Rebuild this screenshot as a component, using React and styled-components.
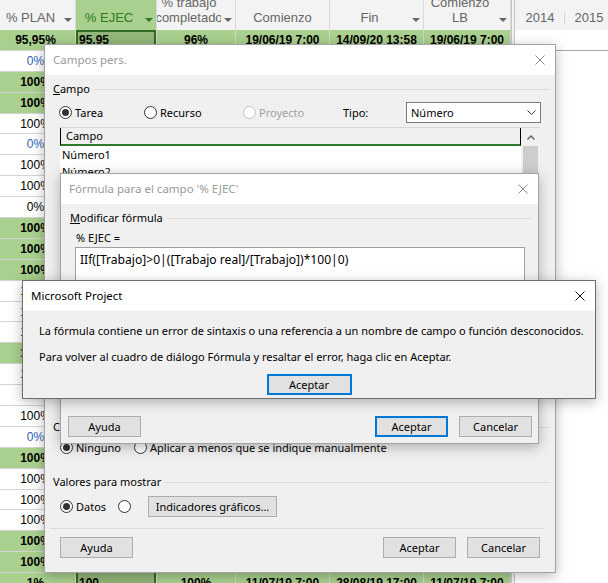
import React from 'react';
import styled, { createGlobalStyle } from 'styled-components';

const uiFont = '"Noto Sans", "Open Sans", "Liberation Sans", sans-serif';
const gridFont = '"Liberation Sans", Arial, sans-serif';

const GlobalStyle = createGlobalStyle`
  html, body {
    margin: 0;
    padding: 0;
    background: #ffffff;
    overflow: hidden;
  }
  * {
    box-sizing: border-box;
  }
`;

const Screen = styled.div`
  position: relative;
  width: 608px;
  height: 583px;
  overflow: hidden;
  background: #ffffff;
`;

/* ---------- hoja de tareas (fondo) ---------- */

const columns = '76px 81px 79px 94px 94px 87px';

const Sheet = styled.div`
  display: flex;
  height: 100%;
  font-family: ${gridFont};
`;

const Table = styled.div`
  flex: none;
  width: 511px;
`;

const HeadRow = styled.div`
  display: grid;
  grid-template-columns: ${columns};
  height: 30px;
  background: #f3f3f3;
`;

const HeadCell = styled.div`
  display: flex;
  align-items: flex-end;
  padding-bottom: 5px;
  border-right: 1px solid #dadada;
  background: ${(p) => (p.$active ? '#a9d08e' : 'transparent')};
  color: ${(p) => (p.$active ? '#2f7a23' : '#666666')};
  font-size: 13px;
  line-height: 15px;
  overflow: hidden;
`;

const HeadLabel = styled.div`
  flex: 1;
  min-width: 0;
  display: flex;
  flex-direction: column;
  align-items: center;
  white-space: nowrap;
  overflow: hidden;
`;

const SortArrow = styled.span`
  flex: none;
  width: 14px;
  height: 15px;
  display: flex;
  align-items: center;
  justify-content: center;
  &::after {
    content: '';
    margin-top: 5px;
    border-left: 4px solid transparent;
    border-right: 4px solid transparent;
    border-top: 4px solid currentColor;
  }
`;

const DataRow = styled.div`
  display: grid;
  grid-template-columns: ${columns};
  height: 20.9px;
  background: ${(p) => (p.$summary ? '#a9d08e' : '#ffffff')};
  font-weight: ${(p) => (p.$summary ? 700 : 400)};
  font-size: 12px;
  color: #000000;
`;

const Cell = styled.div`
  display: flex;
  align-items: center;
  justify-content: ${(p) => (p.$align === 'left' ? 'flex-start' : 'center')};
  padding: ${(p) => (p.$align === 'left' ? '0 0 0 3px' : p.$pad || '0')};
  border-right: 1px solid #d4d4d4;
  border-bottom: 1px solid #d4d4d4;
  white-space: nowrap;
  overflow: hidden;
  color: ${(p) => (p.$blue ? '#2f63b4' : 'inherit')};
`;

// columna % EJEC seleccionada
const PickCell = styled(Cell)`
  background: ${(p) => (p.$summary ? '#93b779' : '#e2e2e2')};
  box-shadow: ${(p) =>
    p.$current
      ? 'inset 0 0 0 2px #2f6b24'
      : 'inset 2px 0 0 #2f6b24, inset -2px 0 0 #2f6b24'};
`;

const Split = styled.div`
  flex: none;
  width: 4px;
  background: #f3f3f3;
  border-left: 1px solid #c4c4c4;
  border-right: 1px solid #c4c4c4;
`;

const Gantt = styled.div`
  flex: 1;
  min-width: 0;
`;

const Timescale = styled.div`
  display: flex;
  align-items: flex-end;
  height: 30px;
  padding: 0 0 5px 1px;
  background: #f3f3f3;
  color: #666666;
  font-size: 13px;
  line-height: 15px;
`;

const Year = styled.div`
  flex: none;
  width: 48px;
  text-align: center;
`;

const YearTick = styled.div`
  flex: none;
  width: 1px;
  height: 12px;
  margin-bottom: 1px;
  background: #d6d6d6;
`;

const GanttBand = styled.div`
  height: 21px;
  border-bottom: 1px solid #a6a6a6;
`;

/* ---------- ventanas ---------- */

const Window = styled.div`
  position: absolute;
  left: ${(p) => p.$x}px;
  top: ${(p) => p.$y}px;
  width: ${(p) => p.$w}px;
  height: ${(p) => p.$h}px;
  display: flex;
  flex-direction: column;
  background: #f0f0f0;
  border: 1px solid ${(p) => (p.$active ? '#6e6e6e' : '#a3a3a3')};
  box-shadow: 0 3px 12px rgba(0, 0, 0, 0.28);
  font-family: ${uiFont};
  font-size: 11px;
  line-height: 16px;
  color: #000000;
`;

const TitleBar = styled.div`
  flex: none;
  display: flex;
  align-items: center;
  height: 30px;
  padding-left: 8px;
  background: #ffffff;
  color: ${(p) => (p.$active ? '#000000' : '#9b9b9b')};
  font-size: 11.5px;
`;

const Caption = styled.div`
  flex: 1;
  white-space: nowrap;
`;

const CloseBox = styled.div`
  flex: none;
  width: 30px;
  height: 100%;
  display: flex;
  align-items: center;
  justify-content: center;
`;

const Body = styled.div`
  flex: 1;
  display: flex;
  flex-direction: column;
  padding: ${(p) => p.$pad};
`;

const Group = styled.div`
  flex: none;
  display: flex;
  align-items: center;
  gap: 4px;
  height: 16px;
  margin-top: ${(p) => p.$mt}px;
  white-space: nowrap;
  &::after {
    content: '';
    flex: 1;
    height: 1px;
    background: #dcdcdc;
  }
`;

const Line = styled.div`
  flex: none;
  display: flex;
  align-items: center;
  height: 21px;
  margin-top: ${(p) => p.$mt}px;
  margin-left: ${(p) => p.$indent}px;
  gap: ${(p) => p.$gap || 0}px;
  white-space: nowrap;
`;

const ScopeRow = styled.div`
  flex: none;
  display: grid;
  grid-template-columns: 85px 99px 100px 63px 135px;
  align-items: center;
  height: 21px;
  margin: 5px 0 0 6px;
`;

const Option = styled.span`
  flex: none;
  display: flex;
  align-items: center;
  gap: 3px;
  width: ${(p) => (p.$w ? `${p.$w}px` : 'auto')};
  color: ${(p) => (p.$disabled ? '#a0a0a0' : '#000000')};
  white-space: nowrap;
`;

const RadioMark = styled.span`
  flex: none;
  width: 13px;
  height: 13px;
  border-radius: 50%;
  border: 1px solid ${(p) => (p.$disabled ? '#c2c2c2' : '#333333')};
  background: #ffffff;
  display: flex;
  align-items: center;
  justify-content: center;
  &::after {
    content: '';
    width: 7px;
    height: 7px;
    border-radius: 50%;
    background: #333333;
    display: ${(p) => (p.$checked ? 'block' : 'none')};
  }
`;

const Dropdown = styled.div`
  display: flex;
  align-items: center;
  justify-content: space-between;
  width: ${(p) => (p.$w ? `${p.$w}px` : 'auto')};
  height: 21px;
  padding: 0 4px 0 4px;
  background: #ffffff;
  border: 1px solid #7a7a7a;
`;

const FieldList = styled.div`
  flex: none;
  display: flex;
  height: 163px;
  margin: 4px 10px 0 7px;
  border-top: 1px solid #d6d6d6;
  background: #ffffff;
`;

const ListColumn = styled.div`
  flex: 1;
  min-width: 0;
`;

const ListHead = styled.div`
  display: flex;
  align-items: center;
  height: 18px;
  padding-left: 5px;
  background: #f0f0f0;
  border-left: 1px solid #000000;
  border-right: 1px solid #000000;
  border-bottom: 2px solid #2e7a2a;
`;

const ListItem = styled.div`
  height: 17px;
  padding-left: 2px;
  line-height: 17px;
  white-space: nowrap;
`;

const ScrollTrack = styled.div`
  flex: none;
  width: 19px;
  display: flex;
  flex-direction: column;
  align-items: center;
  background: #f0f0f0;
`;

const ScrollButton = styled.div`
  width: 100%;
  height: 18px;
  display: flex;
  align-items: center;
  justify-content: center;
`;

const ScrollThumb = styled.div`
  width: 15px;
  height: 60px;
  background: #cdcdcd;
`;

const Separator = styled.div`
  flex: none;
  height: 1px;
  margin: ${(p) => p.$mt}px 5px 0 -3px;
  background: #dcdcdc;
`;

const Footer = styled.div`
  flex: none;
  display: flex;
  align-items: center;
  gap: 11px;
  margin: ${(p) => p.$margin};
`;

const Spacer = styled.div`
  flex: 1;
`;

const PushButton = styled.button`
  flex: none;
  width: ${(p) => p.$w || 73}px;
  height: 21px;
  margin: 0;
  padding: 0;
  background: #e1e1e1;
  border: ${(p) => (p.$focus ? '2px solid #0078d7' : '1px solid #adadad')};
  font: inherit;
  color: #000000;
  white-space: nowrap;
`;

const FormulaName = styled.div`
  flex: none;
  height: 16px;
  margin: 4px 0 0 6px;
`;

const FormulaBox = styled.div`
  flex: none;
  width: 450px;
  height: 110px;
  margin: 1px 0 0 5px;
  padding: 4px 4px;
  background: #ffffff;
  border: 1px solid #a0a0a0;
  white-space: nowrap;
  font-size: 12.1px;
`;

const Message = styled.p`
  margin: ${(p) => p.$mt}px 0 0;
  white-space: nowrap;
`;

const MessageBody = styled.div`
  flex: 1;
  display: flex;
  flex-direction: column;
  padding: 12px 16px 0;
`;

const MessageActions = styled.div`
  display: flex;
  justify-content: center;
  margin-top: 9px;
`;

/* ---------- glifos ---------- */

const CloseGlyph = ({ color }) => (
  <svg width="10" height="10" viewBox="0 0 10 10">
    <path d="M0.5 0.5L9.5 9.5M9.5 0.5L0.5 9.5" stroke={color} strokeWidth="1" fill="none" />
  </svg>
);

const ChevronDown = () => (
  <svg width="9" height="5" viewBox="0 0 9 5">
    <path d="M0.5 0.5L4.5 4.5L8.5 0.5" stroke="#333" strokeWidth="1" fill="none" />
  </svg>
);

const ChevronUp = () => (
  <svg width="8" height="5" viewBox="0 0 8 5">
    <path d="M0.5 4.5L4 1L7.5 4.5" stroke="#606060" strokeWidth="1.4" fill="none" />
  </svg>
);

const Radio = ({ checked, disabled, w, children }) => (
  <Option $w={w} $disabled={disabled}>
    <RadioMark $checked={checked} $disabled={disabled} />
    {children}
  </Option>
);

const DialogFrame = ({ x, y, w, h, active, title, children }) => (
  <Window $x={x} $y={y} $w={w} $h={h} $active={active}>
    <TitleBar $active={active}>
      <Caption>{title}</Caption>
      <CloseBox>
        <CloseGlyph color={active ? '#111' : '#8a8a8a'} />
      </CloseBox>
    </TitleBar>
    {children}
  </Window>
);

/* ---------- datos ---------- */

const headers = [
  { lines: ['% PLAN'] },
  { lines: ['% EJEC'], active: true },
  { lines: ['% trabajo', 'completado'] },
  { lines: ['Comienzo'], plain: true },
  { lines: ['Fin'] },
  { lines: ['Comienzo', 'LB'] },
];

// [resumen, % PLAN, azul]
const plan = [
  [1, '95,95%'], [0, '0%', 1], [1, '100%'], [1, '100%'], [0, '100%'], [0, '0%', 1],
  [0, '100%'], [0, '100%'], [0, '0%'], [1, '100%'], [1, '100%'], [1, '100%'],
  [0, '100%'], [0, '100%'], [0, '100%'], [1, '100%'], [0, '100%'], [0, '0%'],
  [0, '100%'], [0, '0%', 1], [1, '100%'], [0, '100%'], [0, '100%'], [0, '100%'],
  [1, '100%'], [1, '100%'], [1, '1%'],
];

const spans = [
  ['19/06/19 7:00', '14/09/20 13:58', '19/06/19 7:00'],
  ['24/06/19 7:00', '05/07/19 17:00', '24/06/19 7:00'],
  ['08/07/19 7:00', '26/07/19 17:00', '08/07/19 7:00'],
  ['11/07/19 7:00', '28/08/19 17:00', '11/07/19 7:00'],
];

const tasks = plan.map(([summary, value, blue], i) => {
  const pct = value.replace('%', '').replace(',', '.');
  const dates = i === 0 ? spans[0] : spans[(i % 3) + 1];
  return {
    summary: !!summary,
    blue: !!blue,
    plan: value,
    ejec: i === plan.length - 1 ? '100' : pct,
    trab: i === 0 ? '96%' : i === plan.length - 1 ? '100%' : `${Math.round(Number(pct))}%`,
    start: dates[0],
    finish: dates[1],
    baseline: dates[2],
  };
});

export default function App() {
  return (
    <>
      <GlobalStyle />
      <Screen>
        <Sheet>
          <Table>
            <HeadRow>
              {headers.map((h, i) => (
                <HeadCell key={i} $active={h.active}>
                  <HeadLabel>
                    {h.lines.map((l) => (
                      <span key={l}>{l}</span>
                    ))}
                  </HeadLabel>
                  {!h.plain && <SortArrow />}
                </HeadCell>
              ))}
            </HeadRow>
            {tasks.map((t, i) => (
              <DataRow key={i} $summary={t.summary}>
                <Cell $pad="0 4px 0 0" $blue={t.blue}>{t.plan}</Cell>
                <PickCell $align="left" $summary={t.summary} $current={i === 0}>
                  {t.ejec}
                </PickCell>
                <Cell>{t.trab}</Cell>
                <Cell>{t.start}</Cell>
                <Cell>{t.finish}</Cell>
                <Cell>{t.baseline}</Cell>
              </DataRow>
            ))}
          </Table>
          <Split />
          <Gantt>
            <Timescale>
              <Year>2014</Year>
              <YearTick />
              <Year>2015</Year>
            </Timescale>
            <GanttBand />
          </Gantt>
        </Sheet>

        {/* Campos personalizados */}
        <DialogFrame x={44} y={44} w={512} h={529} title="Campos pers.">
          <Body $pad="0 5px 0 8px">
            <Group $mt={6}>
              <span>
                <u>C</u>ampo
              </span>
            </Group>
            <ScopeRow>
              <Radio checked>Tarea</Radio>
              <Radio>Recurso</Radio>
              <Radio disabled>Proyecto</Radio>
              <span>Tipo:</span>
              <Dropdown>
                Número
                <ChevronDown />
              </Dropdown>
            </ScopeRow>
            <FieldList>
              <ListColumn>
                <ListHead>Campo</ListHead>
                <ListItem>Número1</ListItem>
                <ListItem>Número2</ListItem>
                <ListItem>Número3</ListItem>
                <ListItem>Número4</ListItem>
                <ListItem>Número5</ListItem>
                <ListItem>Número6</ListItem>
              </ListColumn>
              <ScrollTrack>
                <ScrollButton>
                  <ChevronUp />
                </ScrollButton>
                <ScrollThumb />
              </ScrollTrack>
            </FieldList>
            <Line $mt={6} $indent={7} $gap={8}>
              <PushButton $w={104}>Cambiar nombre...</PushButton>
              <PushButton $w={73}>Eliminar</PushButton>
              <PushButton $w={170}>Agregar campo a la empresa...</PushButton>
              <PushButton $w={100}>Importar campo...</PushButton>
            </Line>
            <Group $mt={6}>Atributos personalizados</Group>
            <Line $mt={4} $indent={7} $gap={10}>
              <PushButton $w={100}>Búsqueda...</PushButton>
              <PushButton $w={100}>Fórmula...</PushButton>
            </Line>
            <Group $mt={4}>Cálculo para filas de resumen de tareas y grupos</Group>
            <Line $mt={4} $indent={7} $gap={16}>
              <Radio checked>Ninguno</Radio>
              <Radio>Resumen:</Radio>
              <Radio>Usar fórmula</Radio>
            </Line>
            <Group $mt={10}>Cálculo para filas de asignación</Group>
            <Line $mt={2} $indent={7}>
              <Radio checked w={74}>Ninguno</Radio>
              <Radio>Aplicar a menos que se indique manualmente</Radio>
            </Line>
            <Group $mt={16}>Valores para mostrar</Group>
            <Line $mt={6} $indent={7}>
              <Radio checked w={58}>Datos</Radio>
              <Radio w={30} />
              <PushButton $w={129}>Indicadores gráficos...</PushButton>
            </Line>
            <Separator $mt={11} />
            <Footer $margin="8px 10px 0 7px">
              <PushButton>Ayuda</PushButton>
              <Spacer />
              <PushButton>Aceptar</PushButton>
              <PushButton>Cancelar</PushButton>
            </Footer>
          </Body>
        </DialogFrame>

        {/* Editor de fórmula */}
        <DialogFrame x={60} y={173} w={479} h={271} title="Fórmula para el campo '% EJEC'">
          <Body $pad="0 7px 0 9px">
            <Group $mt={6}>
              <span>
                <u>M</u>odificar fórmula
              </span>
            </Group>
            <FormulaName>% EJEC =</FormulaName>
            <FormulaBox>IIf([Trabajo]&gt;0|([Trabajo real]/[Trabajo])*100|0)</FormulaBox>
            <Line $mt={9} $indent={5} $gap={6}>
              <span>Insertar:</span>
              <Dropdown $w={80}>
                Campo
                <ChevronDown />
              </Dropdown>
              <Dropdown $w={80}>
                Función
                <ChevronDown />
              </Dropdown>
              <Spacer />
              <PushButton $w={110}>Importar fórmula...</PushButton>
            </Line>
            <Footer $margin="29px -1px 0 -2px">
              <PushButton>Ayuda</PushButton>
              <Spacer />
              <PushButton $focus>Aceptar</PushButton>
              <PushButton>Cancelar</PushButton>
            </Footer>
          </Body>
        </DialogFrame>

        {/* Aviso de error */}
        <DialogFrame x={22} y={280} w={574} h={119} active title="Microsoft Project">
          <MessageBody>
            <Message $mt={0}>
              La fórmula contiene un error de sintaxis o una referencia a un nombre de campo o
              función desconocidos.
            </Message>
            <Message $mt={10}>
              Para volver al cuadro de diálogo Fórmula y resaltar el error, haga clic en Aceptar.
            </Message>
            <MessageActions>
              <PushButton $w={85} $focus>
                Aceptar
              </PushButton>
            </MessageActions>
          </MessageBody>
        </DialogFrame>
      </Screen>
    </>
  );
}
